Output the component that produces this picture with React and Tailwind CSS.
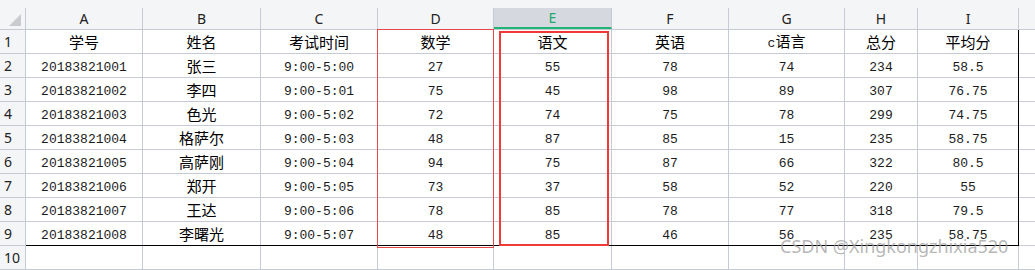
import React from "react";

const cols = [
  { key: "A", w: "w-[117px]" },
  { key: "B", w: "w-[118px]" },
  { key: "C", w: "w-[117px]" },
  { key: "D", w: "w-[116px]" },
  { key: "E", w: "w-[118px]" },
  { key: "F", w: "w-[117px]" },
  { key: "G", w: "w-[116px]" },
  { key: "H", w: "w-[73px]" },
  { key: "I", w: "w-[101px]" },
];

const rows = [
  ["学号", "姓名", "考试时间", "数学", "语文", "英语", "c语言", "总分", "平均分"],
  ["20183821001", "张三", "9:00-5:00", "27", "55", "78", "74", "234", "58.5"],
  ["20183821002", "李四", "9:00-5:01", "75", "45", "98", "89", "307", "76.75"],
  ["20183821003", "色光", "9:00-5:02", "72", "74", "75", "78", "299", "74.75"],
  ["20183821004", "格萨尔", "9:00-5:03", "48", "87", "85", "15", "235", "58.75"],
  ["20183821005", "高萨刚", "9:00-5:04", "94", "75", "87", "66", "322", "80.5"],
  ["20183821006", "郑开", "9:00-5:05", "73", "37", "58", "52", "220", "55"],
  ["20183821007", "王达", "9:00-5:06", "78", "85", "78", "77", "318", "79.5"],
  ["20183821008", "李曙光", "9:00-5:07", "48", "85", "46", "56", "235", "58.75"],
  ["", "", "", "", "", "", "", "", ""],
];

// SimSun-like mix: CJK slightly larger than the half-width digits
const CellText = ({ text }) => {
  const parts = text.split(/([\u4e00-\u9fff]+)/).filter(Boolean);
  return (
    <span className="whitespace-pre">
      {parts.map((p, i) =>
        /[\u4e00-\u9fff]/.test(p) ? (
          <span key={i} className="text-[15px] [font-family:'Noto_Sans_CJK_SC',sans-serif]">
            {p}
          </span>
        ) : (
          <span key={i} className="text-[13px] text-[#1c1c1c] [font-family:'Liberation_Mono',monospace]">
            {p}
          </span>
        )
      )}
    </span>
  );
};

export default function App() {
  return (
    <div className="relative w-[1035px] h-[270px] overflow-hidden bg-white text-black">
      {/* top strip */}
      <div className="h-[8px] bg-[#f4f5f7]" />

      {/* column header */}
      <div className="flex h-[22px] bg-[#f4f5f7] border-b border-[#c6cad4] [font-family:'Noto_Sans',sans-serif] text-[14px] leading-none">
        <div className="relative w-[26px] shrink-0 border-r border-[#c6cad4]">
          <div className="absolute right-[4px] bottom-[3px] w-0 h-0 border-l-[12px] border-l-transparent border-b-[12px] border-b-[#c9cbcf]" />
        </div>
        {cols.map((c) =>
          c.key === "E" ? (
            <div
              key={c.key}
              className={`${c.w} shrink-0 flex items-center justify-center bg-[#d5d8df] border-r border-[#c6cad4] border-b-2 border-b-[#21b276] text-[#21a86f]`}
            >
              {c.key}
            </div>
          ) : (
            <div
              key={c.key}
              className={`${c.w} shrink-0 flex items-center justify-center border-r border-[#c6cad4] text-[#222]`}
            >
              {c.key}
            </div>
          )
        )}
        <div className="flex-1" />
      </div>

      {/* rows */}
      {rows.map((r, ri) => (
        <div key={ri} className="flex h-[24px] border-b border-[#c6cad4]">
          <div className="w-[26px] shrink-0 flex items-center pl-[4px] bg-[#f4f5f7] border-r border-[#c6cad4] text-[14px] text-[#222] [font-family:'Noto_Sans',sans-serif]">
            {ri + 1}
          </div>
          {cols.map((c, ci) => (
            <div
              key={c.key}
              className={`${c.w} shrink-0 flex items-center justify-center border-r border-[#c6cad4]`}
            >
              <CellText text={r[ci]} />
            </div>
          ))}
          <div className="flex-1" />
        </div>
      ))}

      {/* table outer border (black right + bottom) */}
      <div className="absolute left-[26px] top-[30px] w-[993px] h-[216px] border-r border-b border-black pointer-events-none" />

      {/* selection boxes */}
      <div className="absolute left-[377px] top-[29px] w-[117px] h-[219px] border border-[#e54848] pointer-events-none" />
      <div className="absolute left-[499px] top-[31px] w-[110px] h-[215px] border-2 border-[#f03a3a] pointer-events-none" />

      {/* watermark */}
      <div className="absolute left-[780px] top-[234px] text-[18px] leading-[24px] text-[#a0a0a0]/75 [font-family:'Noto_Sans',sans-serif] pointer-events-none">
        CSDN @Xingkongzhixia520
      </div>
    </div>
  );
}
